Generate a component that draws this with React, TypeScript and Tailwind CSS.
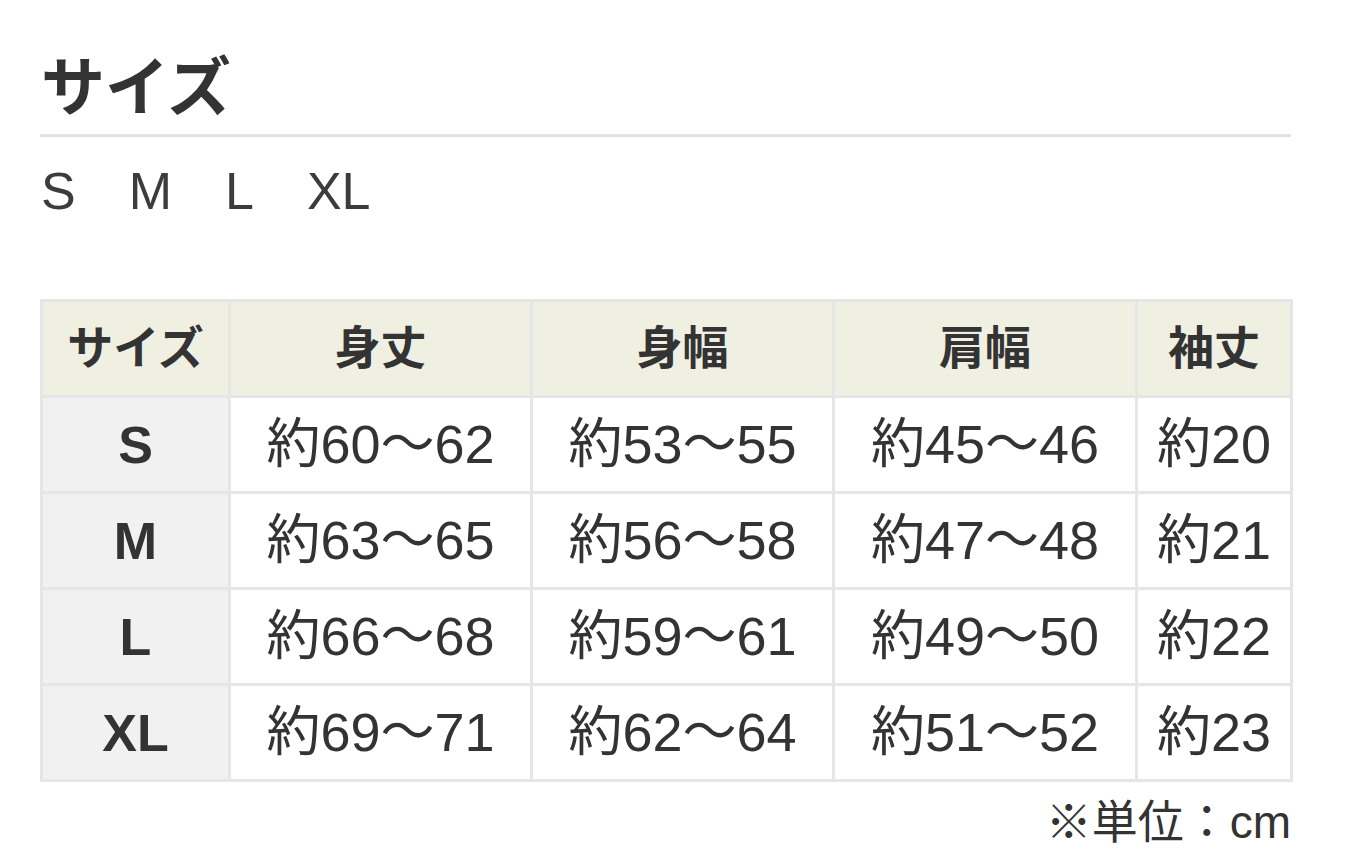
const rows = [
  ["S", "約60〜62", "約53〜55", "約45〜46", "約20"],
  ["M", "約63〜65", "約56〜58", "約47〜48", "約21"],
  ["L", "約66〜68", "約59〜61", "約49〜50", "約22"],
  ["XL", "約69〜71", "約62〜64", "約51〜52", "約23"],
];

const heads = ["サイズ", "身丈", "身幅", "肩幅", "袖丈"];
const widths = ["w-[188px]", "w-[302px]", "w-[302px]", "w-[303px]", "w-[155px]"];

function App() {
  return (
    <div
      className="bg-white text-[#333] px-[40px] pt-[48px] min-h-[864px]"
      style={{ fontFamily: '"Liberation Sans", "Noto Sans CJK JP", sans-serif' }}
    >
      <div className="w-[1251px]">
        <h1 className="text-[64px] font-bold leading-[80px] pl-[1px]">サイズ</h1>
        <div className="h-[3px] bg-[#e2e2e2] mt-[6px]" />
        <div className="flex gap-[53px] text-[52px] leading-[60px] mt-[24px] pl-[1px] text-[#3c3c3c]">
          <span>S</span>
          <span>M</span>
          <span>L</span>
          <span>XL</span>
        </div>

        <table className="mt-[78px] w-[1250px] border-collapse table-fixed">
          <thead>
            <tr className="h-[96px] bg-[#efefe2]">
              {heads.map((h, i) => (
                <th key={h} className={`${widths[i]} border-[3px] border-[#e6e6e6] text-[46px] font-bold text-center`}>
                  {h}
                </th>
              ))}
            </tr>
          </thead>
          <tbody>
            {rows.map((r) => (
              <tr key={r[0]} className="h-[96px]">
                {r.map((c, i) =>
                  i === 0 ? (
                    <td key={i} className="border-[3px] border-[#e6e6e6] bg-[#f1f1f1] text-[52px] font-bold text-center">
                      {c}
                    </td>
                  ) : (
                    <td key={i} className="border-[3px] border-[#e6e6e6] bg-white text-[54px] text-center">
                      {c}
                    </td>
                  )
                )}
              </tr>
            ))}
          </tbody>
        </table>
        <div className="text-right text-[46px] leading-[60px] mt-[10px]">※単位：cm</div>
      </div>
    </div>
  );
}

export default App;
